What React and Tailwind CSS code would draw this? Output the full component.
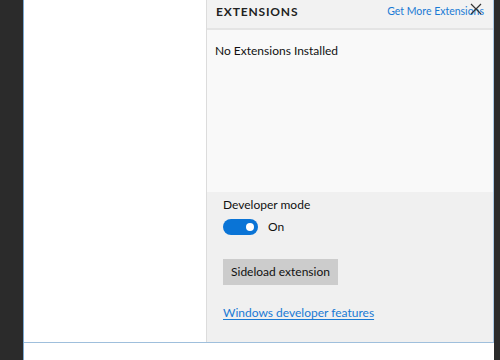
export default function App() {
  return (
    <div
      className="w-[500px] h-[360px] flex bg-white overflow-hidden"
      style={{ fontFamily: 'Lato, "Noto Sans", sans-serif' }}
    >
      {/* left dark strip */}
      <div className="w-[24px] shrink-0 bg-[#2b2b2b] border-r border-[#7aa7d0]" />

      <div className="w-[470px] shrink-0 flex flex-col">
        <div className="h-[343px] shrink-0 flex border-b border-[#9fbfdc]">
          {/* page area */}
          <div className="w-[182px] shrink-0 bg-white" />

          {/* extensions panel */}
          <div className="flex-1 flex flex-col border-l border-[#dcdcdc] border-r border-r-[#a9c8e4]">
            <div className="h-[30px] shrink-0 bg-[#f2f2f2] border-b-2 border-[#e4e4e4] flex items-center justify-between pl-[9px] pr-[8px] pb-[4px] relative">
              <span className="text-[12px] font-bold tracking-[0.07em] text-[#222]">EXTENSIONS</span>
              <span className="text-[10.5px] text-[#1a7ad4] mr-[1px]">Get More Extensions</span>
              <svg className="absolute right-[11px] top-[3px]" width="12" height="12" viewBox="0 0 12 12">
                <path d="M1 1 L11 11 M11 1 L1 11" stroke="#333" strokeWidth="1.2" />
              </svg>
            </div>
            <div className="h-[162px] shrink-0 bg-[#f9f9f9] px-[8px] pt-[12px]">
              <p className="text-[12px] text-[#111]">No Extensions Installed</p>
            </div>
            <div className="flex-1 bg-[#f0f0f0] px-[16px] pt-[4px]">
              <p className="text-[12px] text-[#111]">Developer mode</p>
              <div className="flex items-center gap-[10px] mt-[4px]">
                <div className="w-[35px] h-[16px] rounded-full bg-[#0a74d6] flex items-center justify-end pr-[4px]">
                  <div className="w-[8px] h-[8px] rounded-full bg-white" />
                </div>
                <span className="text-[12px] text-[#111]">On</span>
              </div>
              <button className="mt-[23px] h-[26px] w-[115px] bg-[#cccccc] text-[12px] text-[#111]">
                Sideload extension
              </button>
              <div className="mt-[14px]">
                <a className="text-[12px] text-[#1a7ad4] underline underline-offset-2">Windows developer features</a>
              </div>
            </div>
          </div>
        </div>
        <div className="flex-1 bg-white" />
      </div>

      <div className="flex-1 bg-[#2b2b2b]" />
    </div>
  );
}
